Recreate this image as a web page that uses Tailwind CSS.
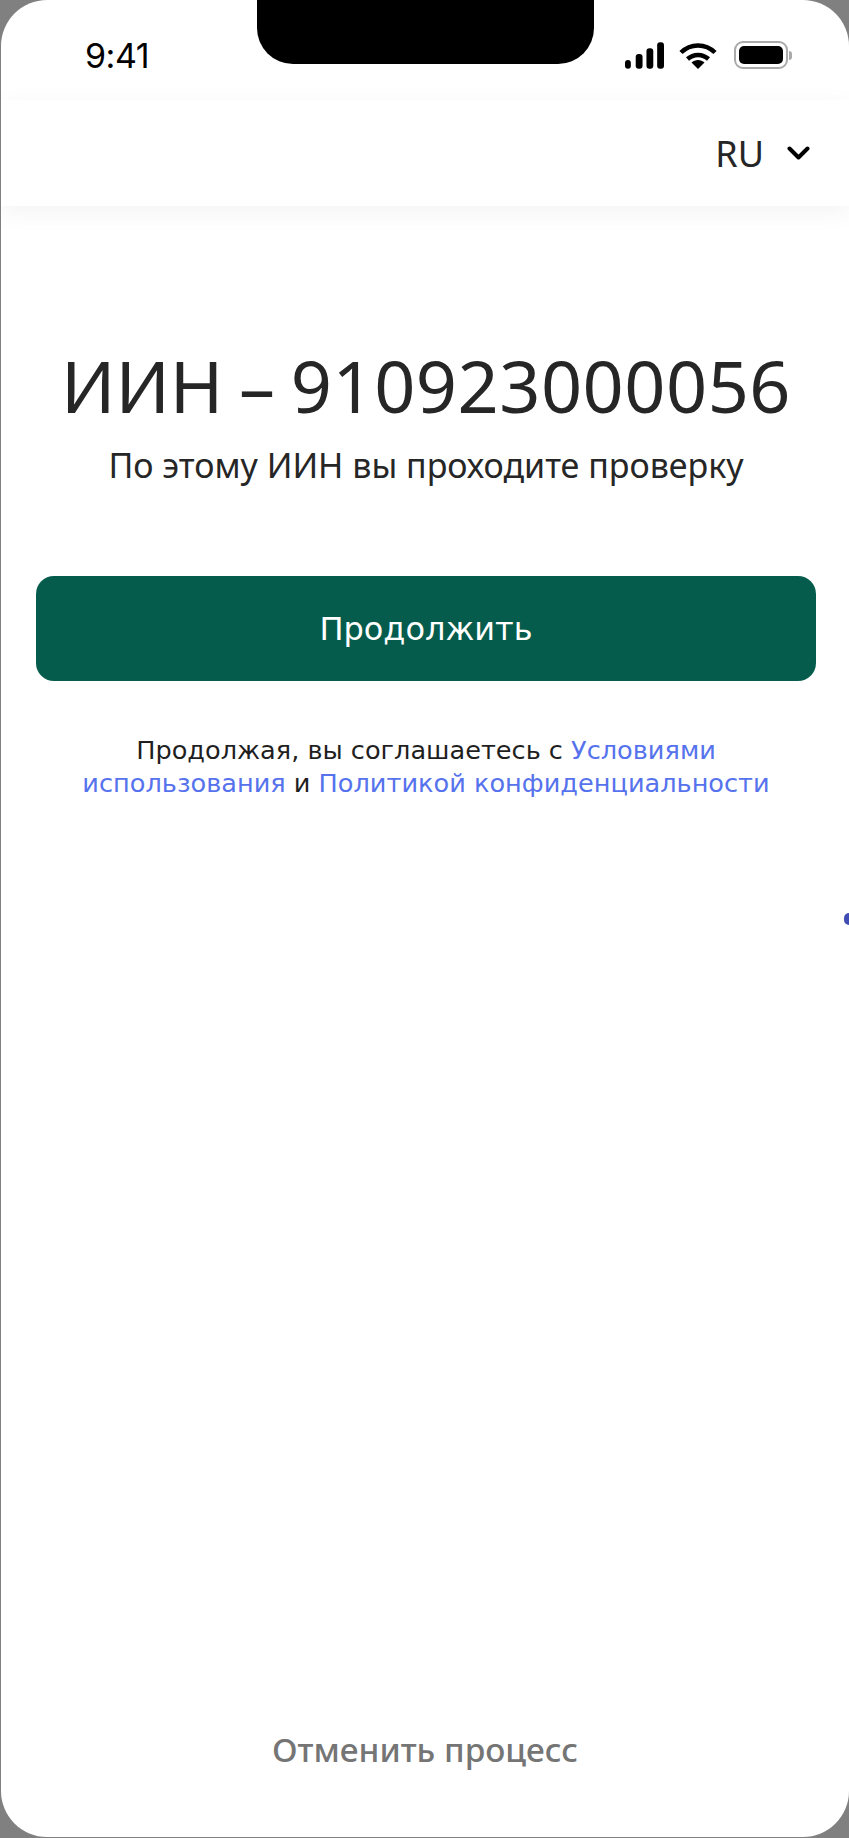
<!DOCTYPE html>
<html lang="ru">
    <head>
        <meta charset="UTF-8">
        <meta name="viewport" content="width=device-width, initial-scale=1.0">
        <title>ИИН</title>
        <script src="https://cdn.jsdelivr.net/npm/@tailwindcss/browser@4"></script>
    </head>
    <body class="bg-[#808080] font-['Noto_Sans',sans-serif]">
        <div class="relative ml-px flex h-[1837px] w-[848px] flex-col overflow-hidden rounded-[46px] bg-white">
            <!-- notch -->
            <div class="absolute left-[256px] top-0 h-[64px] w-[337px] rounded-b-[36px] bg-black"></div>

            <!-- status bar -->
            <div class="flex h-[100px] items-start justify-between pl-[84px] pr-[57px] pt-[36px]">
                <span class="font-['Inter',sans-serif] text-[34px] leading-[40px] tracking-[-0.5px] text-black">9:41</span>
                <div class="flex items-center gap-[15px] pt-[5px]">
                    <svg class="h-[27px] w-[39px]" viewBox="0 0 40 27" fill="#000">
                        <rect x="0" y="18" width="6" height="9" rx="3"/>
                        <rect x="11" y="12" width="7" height="15" rx="3"/>
                        <rect x="22" y="6" width="7" height="21" rx="3"/>
                        <rect x="33" y="0" width="7" height="27" rx="3"/>
                    </svg>
                    <svg class="h-[27px] w-[38px]" viewBox="0 0 38 27" fill="none" stroke="#000" stroke-width="4.5">
                        <path d="M2 10.5C11.5 1 26.500 1 36 10.500"/>
                        <path d="M8.500 17C14.500 11.500 23.500 11.500 29.500 17"/>
                        <path d="M19 27l-6.500-6.500C16 17 22 17 25.500 20.500z" fill="#000" stroke="none"/>
                    </svg>
                    <div class="ml-[2px] flex items-center">
                        <div class="h-[28px] w-[54px] rounded-[9px] border-[2px] border-[#aaaaaa] p-[3px]">
                            <div class="h-full w-full rounded-[5px] bg-black"></div>
                        </div>
                        <div class="ml-[1px] h-[9px] w-[3px] rounded-r-full bg-[#aaaaaa]"></div>
                    </div>
                </div>
            </div>

            <!-- header -->
            <header class="flex h-[106px] items-center justify-end gap-[23px] pr-[39px] shadow-[0_6px_24px_rgba(0,0,0,0.05)]">
                <span class="pt-[2px] text-[36px] leading-none text-[#262626]">RU</span>
                <svg class="h-[14px] w-[23px]" viewBox="0 0 23 14" fill="none" stroke="#000" stroke-width="4" stroke-linecap="round" stroke-linejoin="round">
                    <path d="M2.500 2.500l9 9 9-9"/>
                </svg>
            </header>

            <!-- content -->
            <main class="flex flex-1 flex-col pl-[35px] pr-[33px] pt-[137px]">
                <h1 class="text-center text-[72px] leading-[84px] text-[#262626] [word-spacing:-3px]">ИИН – <span class="tracking-[0.5px]">910923000056</span></h1>
                <p class="mt-[15px] text-center text-[34px] leading-[46px] text-[#262626]">По этому ИИН вы проходите проверку</p>
                <button class="mt-[88px] h-[105px] w-full rounded-[18px] bg-[#055c4c] font-['DejaVu_Sans',sans-serif] text-[32px] text-white">Продолжить</button>
                <p class="mt-[53px] text-center font-['DejaVu_Sans',sans-serif] text-[25.6px] leading-[33px] text-[#1f1f1f]">Продолжая, вы соглашаетесь с <a class="text-[#5672ed]">Условиями<br>использования</a> и <a class="text-[#5672ed]">Политикой конфиденциальности</a></p>
            </main>

            <!-- footer -->
            <footer class="pb-[66px] text-center">
                <a class="text-[33.400px] font-medium leading-[44px] text-[#757575]">Отменить процесс</a>
            </footer>

            <div class="absolute right-[-5px] top-[913px] h-[12px] w-[10px] rounded-full bg-[#3f4db5]"></div>
        </div>
    </body>
</html>
